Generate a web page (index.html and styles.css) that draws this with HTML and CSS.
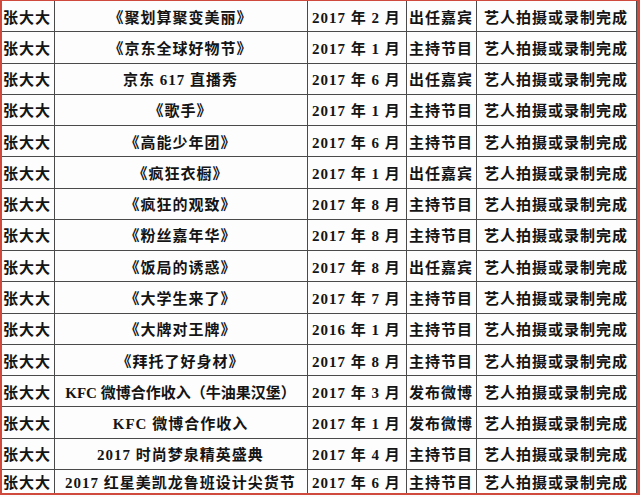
FILE: index.html
```html
<!DOCTYPE html>
<html lang="zh">
<head>
<meta charset="utf-8">
<link rel="stylesheet" href="styles.css">
</head>
<body>
<div class="frame">
<table class="sheet">
<colgroup>
<col class="c-name"><col class="c-show"><col class="c-date"><col class="c-type"><col class="c-status">
</colgroup>
<tbody>
<tr><td class="name">张大大</td><td>《聚划算聚变美丽》</td><td>2017 年 2 月</td><td>出任嘉宾</td><td>艺人拍摄或录制完成</td></tr>
<tr><td class="name">张大大</td><td>《京东全球好物节》</td><td>2017 年 1 月</td><td>主持节目</td><td>艺人拍摄或录制完成</td></tr>
<tr><td class="name">张大大</td><td>京东 617 直播秀</td><td>2017 年 6 月</td><td>出任嘉宾</td><td>艺人拍摄或录制完成</td></tr>
<tr><td class="name">张大大</td><td>《歌手》</td><td>2017 年 1 月</td><td>主持节目</td><td>艺人拍摄或录制完成</td></tr>
<tr><td class="name">张大大</td><td>《高能少年团》</td><td>2017 年 6 月</td><td>主持节目</td><td>艺人拍摄或录制完成</td></tr>
<tr><td class="name">张大大</td><td>《疯狂衣橱》</td><td>2017 年 1 月</td><td>出任嘉宾</td><td>艺人拍摄或录制完成</td></tr>
<tr><td class="name">张大大</td><td>《疯狂的观致》</td><td>2017 年 8 月</td><td>主持节目</td><td>艺人拍摄或录制完成</td></tr>
<tr><td class="name">张大大</td><td>《粉丝嘉年华》</td><td>2017 年 8 月</td><td>主持节目</td><td>艺人拍摄或录制完成</td></tr>
<tr><td class="name">张大大</td><td>《饭局的诱惑》</td><td>2017 年 8 月</td><td>出任嘉宾</td><td>艺人拍摄或录制完成</td></tr>
<tr><td class="name">张大大</td><td>《大学生来了》</td><td>2017 年 7 月</td><td>主持节目</td><td>艺人拍摄或录制完成</td></tr>
<tr><td class="name">张大大</td><td>《大牌对王牌》</td><td>2016 年 1 月</td><td>主持节目</td><td>艺人拍摄或录制完成</td></tr>
<tr><td class="name">张大大</td><td>《拜托了好身材》</td><td>2017 年 8 月</td><td>主持节目</td><td>艺人拍摄或录制完成</td></tr>
<tr><td class="name">张大大</td><td class="tight">KFC 微博合作收入（牛油果汉堡）</td><td>2017 年 3 月</td><td>发布微博</td><td>艺人拍摄或录制完成</td></tr>
<tr><td class="name">张大大</td><td>KFC 微博合作收入</td><td>2017 年 1 月</td><td>发布微博</td><td>艺人拍摄或录制完成</td></tr>
<tr><td class="name">张大大</td><td>2017 时尚梦泉精英盛典</td><td>2017 年 4 月</td><td>主持节目</td><td>艺人拍摄或录制完成</td></tr>
<tr class="last"><td class="name">张大大</td><td>2017 红星美凯龙鲁班设计尖货节</td><td>2017 年 6 月</td><td>主持节目</td><td>艺人拍摄或录制完成</td></tr>
</tbody>
</table>
</div>
</body>
</html>
```

FILE: styles.css
```css
html, body {
  margin: 0;
  padding: 0;
  background: #fbfbfb;
}
.frame {
  width: 635px;
  height: 492px;
  border-top: 1px solid #cf4a3c;
  border-left: 2px solid #cf4a3c;
  border-right: 3px solid #cf4a3c;
  border-bottom: 2px solid #cf4a3c;
  overflow: hidden;
  background: #fdfdfd;
}
.sheet {
  width: 634px;
  table-layout: fixed;
  border-collapse: collapse;
  font-family: "Liberation Serif", "Noto Sans CJK SC", serif;
  font-weight: 700;
  font-size: 15px;
  letter-spacing: 1px;
  color: #141414;
}
.c-name { width: 52px; }
.c-show { width: 253px; }
.c-date { width: 99px; }
.c-type { width: 70px; }
.c-status { width: 160px; }
.sheet td {
  height: 30.27px;
  padding: 0;
  border: 1px solid #4a4a4a;
  text-align: center;
  white-space: nowrap;
  overflow: hidden;
}
.sheet tr:first-child td { border-top: none; }
.sheet td:first-child { border-left: none; }
.sheet tr.last td { height: 23px; border-bottom: none; }
.sheet td.name {
  text-align: left;
  padding-left: 1px;
}
.sheet td.tight {
  letter-spacing: 0;
}
```
